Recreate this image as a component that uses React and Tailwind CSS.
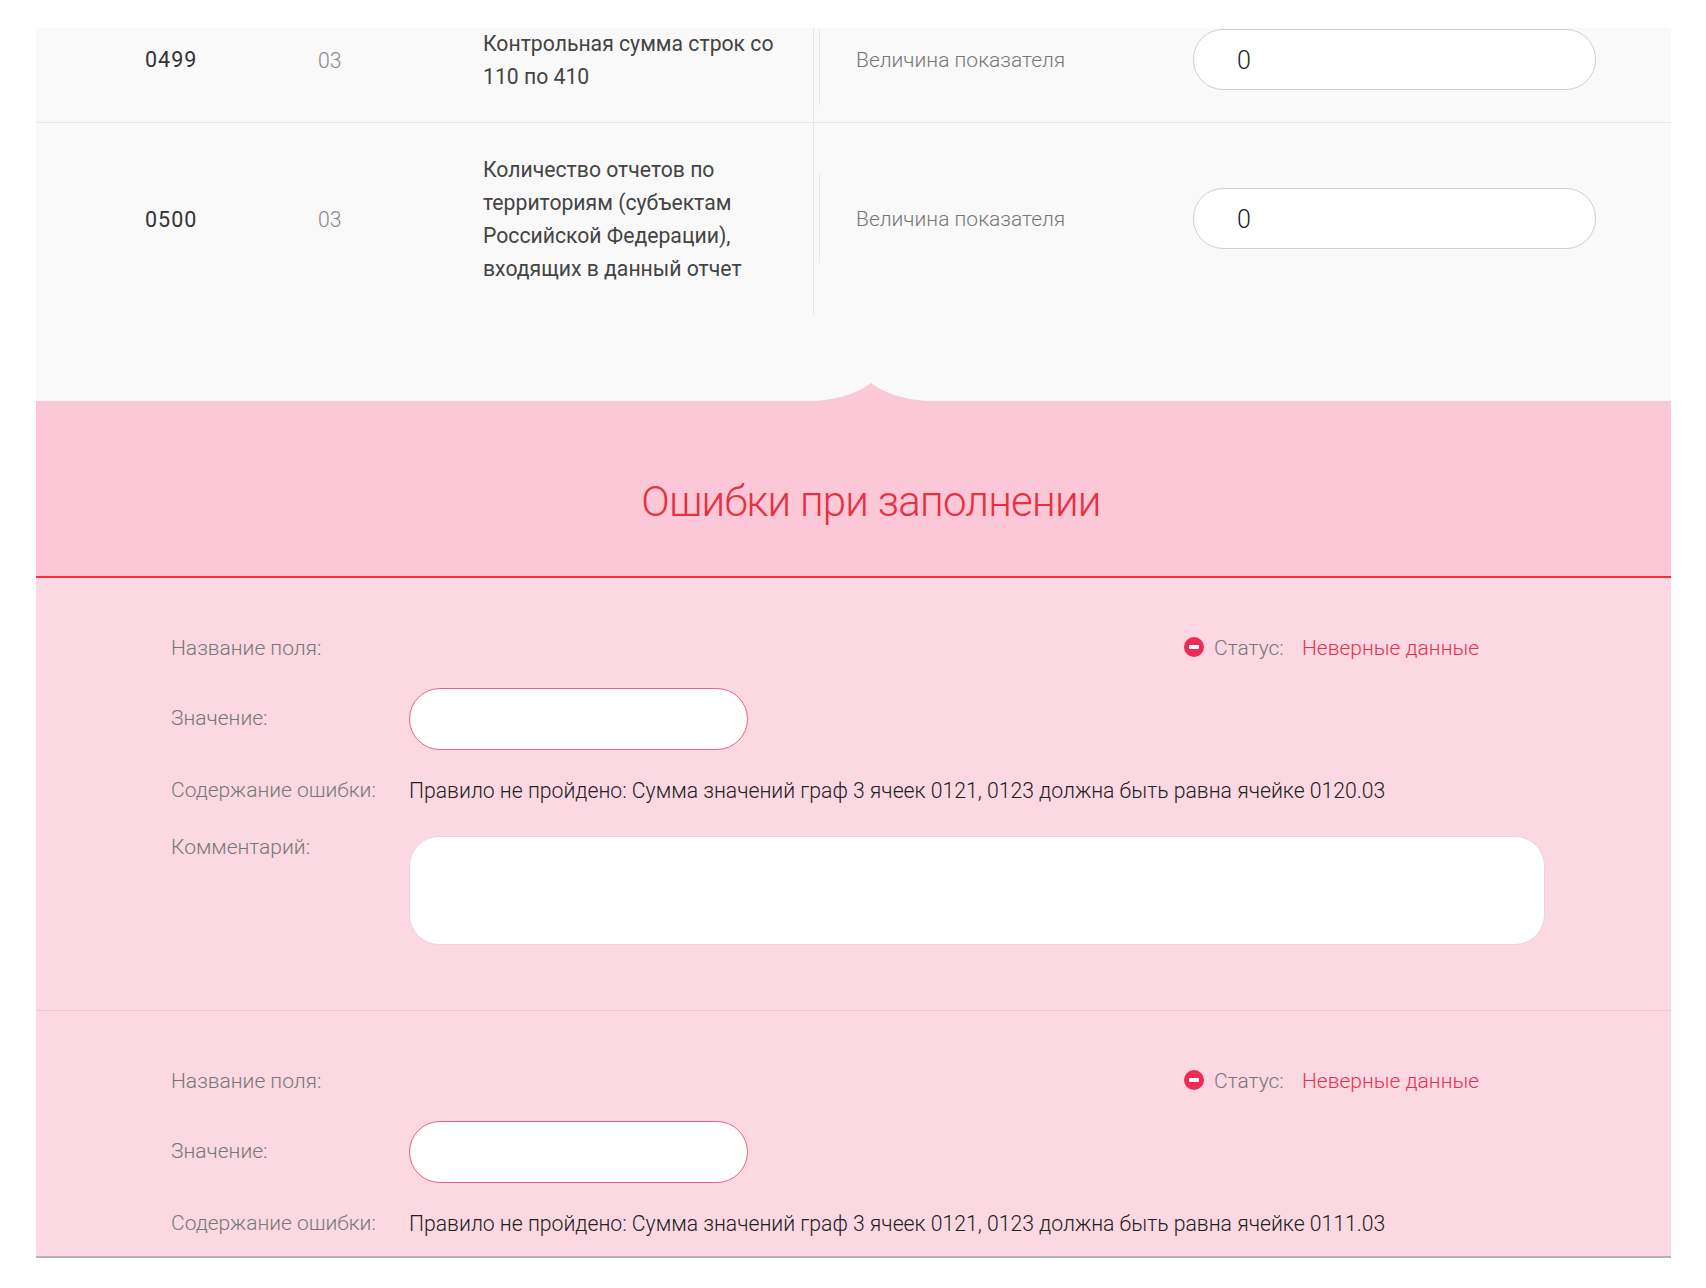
const font = "font-['Roboto',sans-serif]";

function DataRow({ code, lines, className }) {
  return (
    <div className={`flex items-center ${className}`}>
      <div className="mt-[3px] w-[282px] pl-[109px] text-[21.5px] tracking-[1px] text-[#333]">{code}</div>
      <div className="mt-[3px] w-[165px] text-[21.2px] font-light text-[#888]">03</div>
      <div className="mt-px w-[373px] text-[21.2px] leading-[33px] text-[#444]">
        {lines.map((line) => (
          <div key={line} className="whitespace-nowrap">{line}</div>
        ))}
      </div>
      <div className="mt-[3px] w-[337px] text-[21px] font-light text-[#777]">Величина показателя</div>
      <input
        readOnly
        value="0"
        className="h-[61px] w-[403px] rounded-[30px] border border-[#cfcfcf] bg-white pl-[43px] pt-[2px] text-[25px] font-light text-[#222] outline-none"
      />
    </div>
  );
}

function StatusIcon() {
  return (
    <svg width="20" height="20" viewBox="0 0 20 20" className="shrink-0">
      <circle cx="10" cy="10" r="10" fill="#ee2a55" />
      <rect x="5" y="8" width="10" height="4" rx="1" fill="#fff" />
    </svg>
  );
}

function ErrorItem({ message, comment, className }) {
  return (
    <div className={`pl-[135px] pt-[56px] text-[21px] font-light text-[#777] ${className}`}>
      <div className="flex h-[26px] items-center">
        <div className="mt-[3px] w-[238px]">Название поля:</div>
        <div className="ml-[775px] flex items-center">
          <StatusIcon />
          <span className="ml-[10px] mt-[3px] w-[88px]">Статус:</span>
          <span className="mt-[3px] text-[#e6304f]">Неверные данные</span>
        </div>
      </div>
      <div className="mt-[28px] flex h-[62px] items-center">
        <div className="w-[238px]">Значение:</div>
        <input
          readOnly
          className="h-[62px] w-[339px] rounded-[31px] border border-[#e8637f] bg-white outline-none"
        />
      </div>
      <div className="mt-[27px] flex h-[26px] items-center">
        <div className="mt-[2px] w-[238px]">Содержание ошибки:</div>
        <div className="mt-[2px] whitespace-nowrap text-[21.2px] text-[#222]">{message}</div>
      </div>
      {comment && (
        <div className="mt-[33px] flex">
          <div className="w-[238px] leading-[22px]">Комментарий:</div>
          <textarea
            readOnly
            className="h-[109px] w-[1136px] resize-none rounded-[30px] border border-[#e8d5db] bg-white outline-none"
          />
        </div>
      )}
    </div>
  );
}

export default function App() {
  return (
    <div className={`min-h-[1288px] bg-white pb-[31px] pl-[36px] pr-[35px] pt-[28px] ${font}`}>
      <div className="relative bg-[#f9f9f9]">
        <DataRow
          code="0499"
          lines={["Контрольная сумма строк со", "110 по 410"]}
          className="h-[95px] border-b border-[#e6e6ec] pb-[32px]"
        />
        <DataRow
          code="0500"
          lines={["Количество отчетов по", "территориям (субъектам", "Российской Федерации),", "входящих в данный отчет"]}
          className="h-[278px] pb-[87px]"
        />
        {/* column dividers */}
        <div className="absolute left-[777px] top-0 h-[286px] w-px bg-[#e4e4e4]" />
        <div className="absolute left-[783px] top-0 h-[77px] w-px bg-[#e8e8e8]" />
        <div className="absolute left-[783px] top-[145px] h-[90px] w-px bg-[#e8e8e8]" />
        <svg width="110" height="18" viewBox="0 0 110 18" className="absolute bottom-0 left-[780px]">
          <path d="M0 18 C24 16 42 10 55 0 C68 10 86 16 110 18 Z" fill="#fcc8d8" />
        </svg>
      </div>

      <div className="flex h-[177px] items-center justify-center border-b-2 border-[#f2303f] bg-[#fcc8d8] pl-[35px] pt-[26px]">
        <h1 className="text-[42px] font-light tracking-[-0.75px] text-[#e8303f]">Ошибки при заполнении</h1>
      </div>

      <div className="border-b-2 border-[#b5b0b2] bg-[#fcd8e3]">
        <ErrorItem
          comment
          message="Правило не пройдено: Сумма значений граф 3 ячеек 0121, 0123 должна быть равна ячейке 0120.03"
          className="h-[433px] border-b border-[#f5c4d2]"
        />
        <ErrorItem
          message="Правило не пройдено: Сумма значений граф 3 ячеек 0121, 0123 должна быть равна ячейке 0111.03"
          className="h-[245px]"
        />
      </div>
    </div>
  );
}
